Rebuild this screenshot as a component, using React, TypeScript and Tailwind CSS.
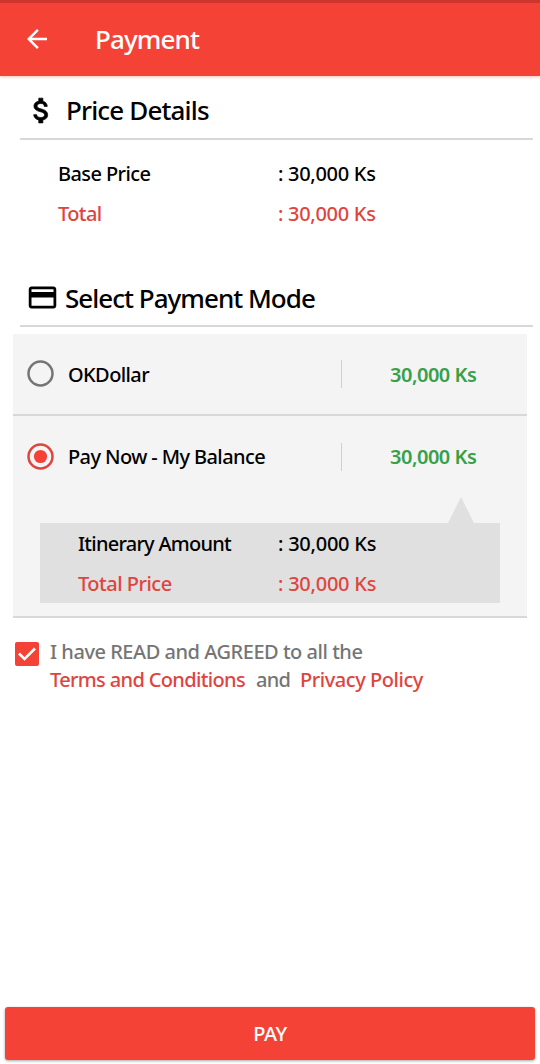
import { useState } from 'react';
import { MdArrowBack, MdCreditCard } from 'react-icons/md';

const paymentModes = [
  { id: 'okdollar', name: 'OKDollar', amount: '30,000 Ks' },
  { id: 'balance', name: 'Pay Now - My Balance', amount: '30,000 Ks' },
];

function DollarIcon() {
  return (
    <svg viewBox="0 0 24 24" className="size-[33px]" fill="currentColor" stroke="currentColor" strokeWidth="0.5">
      <path d="M11.8 10.9c-2.27-.59-3-1.2-3-2.15 0-1.09 1.01-1.85 2.7-1.85 1.78 0 2.44.85 2.5 2.1h2.21c-.07-1.72-1.12-3.3-3.21-3.81V3h-3v2.16c-1.94.42-3.5 1.68-3.5 3.61 0 2.31 1.91 3.46 4.7 4.13 2.5.6 3 1.48 3 2.41 0 .69-.49 1.79-2.7 1.79-2.06 0-2.87-.92-2.98-2.1h-2.2c.12 2.19 1.76 3.42 3.68 3.83V21h3v-2.15c1.95-.37 3.5-1.5 3.5-3.55 0-2.84-2.43-3.81-4.7-4.4z" />
    </svg>
  );
}

function Radio({ checked }: { checked: boolean }) {
  return (
    <svg viewBox="0 0 27 27" className="-mt-px size-[27px] shrink-0">
      <circle
        cx="13.5"
        cy="13.5"
        r="12"
        fill="none"
        strokeWidth="2.5"
        className={checked ? 'stroke-[#e0443f]' : 'stroke-[#757575]'}
      />
      {checked && <circle cx="13.5" cy="13.5" r="6.6" fill="#f44336" />}
    </svg>
  );
}

export default function App() {
  const [selected, setSelected] = useState('balance');
  const [agreed, setAgreed] = useState(true);

  return (
    <div className="flex h-[1064px] w-[540px] flex-col overflow-hidden bg-white font-['Noto_Sans',sans-serif] text-[20px] leading-[28px] font-medium text-black">
      {/* Header */}
      <header className="flex h-[76px] shrink-0 items-center border-t-[3px] border-[#cc362c] bg-[#f44336] pb-[2px] pl-[23px] text-white shadow-[0_1px_3px_rgba(244,67,54,0.35)]">
        <MdArrowBack className="size-[30px] -ml-px" />
        <h1 className="ml-[43px] text-[26px] tracking-[-0.9px]">Payment</h1>
      </header>

      {/* Price details */}
      <section>
        <div className="mr-[7px] ml-[20px] flex h-[64px] items-center border-b-2 border-[#d8d8d8] pt-[6px] pl-[5px]">
          <DollarIcon />
          <h2 className="ml-[8px] text-[26px] tracking-[-0.85px]">Price Details</h2>
        </div>
        <div className="mt-[14px] flex h-[40px] items-center pl-[58px]">
          <span className="w-[220px] tracking-[-0.6px]">Base Price</span>
          <span className="tracking-[-0.3px]">: 30,000 Ks</span>
        </div>
        <div className="flex h-[40px] items-center pl-[58px] text-[#e0443f]">
          <span className="w-[220px] tracking-[-0.6px]">Total</span>
          <span className="tracking-[-0.3px]">: 30,000 Ks</span>
        </div>
      </section>

      {/* Payment mode */}
      <section>
        <div className="mt-[33px] mr-[7px] ml-[20px] flex h-[60px] items-center border-b-2 border-[#d8d8d8] pt-[3px] pl-[6px]">
          <MdCreditCard className="size-[33px]" />
          <h2 className="ml-[6px] text-[26px] tracking-[-0.98px]">Select Payment Mode</h2>
        </div>
        <div className="mx-[13px] mt-[7px] h-[284px] border-b-2 border-[#d8d8d8] bg-[#f4f4f4]">
          {paymentModes.map((mode, i) => (
            <div
              key={mode.id}
              onClick={() => setSelected(mode.id)}
              className={`flex items-center pl-[14px] ${i === 0 ? 'h-[82px] border-b-2 border-[#d8d8d8]' : 'h-[81px]'}`}
            >
              <Radio checked={selected === mode.id} />
              <span className="mt-px ml-[14px] w-[273px] tracking-[-0.6px]">{mode.name}</span>
              <span className="h-[28px] w-px bg-[#cfcfcf]" />
              <span className="mt-px ml-[48px] font-semibold tracking-[-0.5px] text-[#38a04a]">{mode.amount}</span>
            </div>
          ))}
          <svg className="ml-[434px] block h-[26px] w-[28px]" viewBox="0 0 28 26">
            <path d="M14 0 27 26H1z" fill="#e0e0e0" />
          </svg>
          <div className="mx-[27px] h-[80px] bg-[#e0e0e0] pt-px pl-[38px]">
            <div className="flex h-[40px] items-center">
              <span className="w-[200px] tracking-[-0.75px]">Itinerary Amount</span>
              <span className="tracking-[-0.25px]">: 30,000 Ks</span>
            </div>
            <div className="flex h-[40px] items-center text-[#e0443f]">
              <span className="w-[200px] tracking-[-0.5px]">Total Price</span>
              <span className="tracking-[-0.25px]">: 30,000 Ks</span>
            </div>
          </div>
        </div>
      </section>

      {/* Terms */}
      <div className="mt-[20px] flex pl-[15px] text-[#757575]">
        <button
          onClick={() => setAgreed(!agreed)}
          className="mt-[4px] flex size-[24px] shrink-0 items-center justify-center rounded-[2px] bg-[#f44336]"
        >
          {agreed && (
            <svg viewBox="0 0 24 24" className="size-[24px]" fill="none" stroke="white" strokeWidth="2.6">
              <path d="M4 11.5 9.5 17 20 6.5" />
            </svg>
          )}
        </button>
        <div className="ml-[11px]">
          <p className="tracking-[-0.47px]">I have READ and AGREED to all the</p>
          <p className="flex">
            <span className="w-[206px] tracking-[-0.65px] text-[#e0443f]">Terms and Conditions</span>
            <span className="w-[44px] tracking-[-0.8px]">and</span>
            <span className="tracking-[-0.45px] text-[#e0443f]">Privacy Policy</span>
          </p>
        </div>
      </div>

      {/* Pay */}
      <button className="mx-[5px] mt-auto mb-[4px] h-[53px] shrink-0 rounded-[3px] bg-[#f44336] tracking-[-0.5px] text-white shadow-[0_1px_3px_rgba(0,0,0,0.35)]">
        PAY
      </button>
    </div>
  );
}
